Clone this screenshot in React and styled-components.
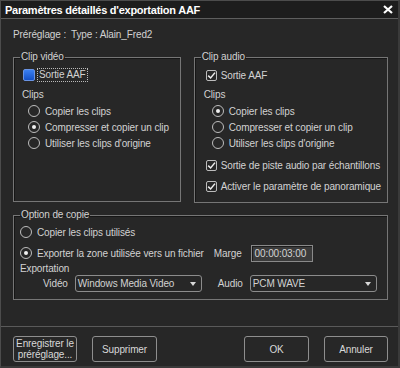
import React from 'react'
import styled, { createGlobalStyle } from 'styled-components'

const Global = createGlobalStyle`
  html, body { margin: 0; padding: 0; background: #272727; }
  body { font-family: "Liberation Sans", Arial, sans-serif; }
  * { box-sizing: border-box; }
`

const Window = styled.div`
  width: 400px;
  height: 368px;
  display: flex;
  flex-direction: column;
  background: #272727;
  border: 1px solid #4c4c4c;
  border-right: 2px solid #3a3a3a;
  border-bottom: 2px solid #3a3a3a;
  color: #d2d2d2;
  font-size: 10px;
  letter-spacing: -0.12px;
`

const TitleBar = styled.div`
  height: 18px;
  flex: none;
  display: flex;
  align-items: center;
  justify-content: space-between;
  padding: 0 5px 0 4px;
  background: #1d1d1d;
  border-bottom: 1px solid #5e5e5e;
  color: #fff;
  font-weight: bold;
  font-size: 11px;
  letter-spacing: -0.25px;
`

const Body = styled.div`
  flex: 1;
  display: flex;
  flex-direction: column;
  padding: 0 10px 0 12px;
`

const Preset = styled.div`
  height: 14px;
  margin-top: 9px;
  line-height: 14px;
  display: flex;
  gap: 5px;
`

const Columns = styled.div`
  display: flex;
  gap: 13px;
  margin-top: ${p => p.$mt}px;
`

const Group = styled.fieldset`
  margin: 0;
  padding: 0 6px;
  width: ${p => p.$w}px;
  height: ${p => p.$h}px;
  border: 1px solid #767676;
  box-shadow: inset 1px 1px 0 #161616;
  display: flex;
  flex-direction: column;
`

const Legend = styled.legend`
  padding: 0 1px;
  line-height: 12px;
  font-size: 10px;
  color: #d2d2d2;
`

const Row = styled.div`
  display: flex;
  align-items: center;
  height: ${p => p.$h || 16}px;
  margin-top: ${p => p.$mt || 0}px;
  margin-left: ${p => p.$ml || 0}px;
  gap: ${p => p.$gap || 5}px;
  white-space: nowrap;
`

const Label = styled.span`
  padding: 0 1px;
  outline: ${p => (p.$focus ? '1px dotted #bbb' : 'none')};
  outline-offset: 0;
  line-height: 12px;
`

const Box = styled.span`
  width: ${p => (p.$blue ? 12 : 11)}px;
  height: ${p => (p.$blue ? 12 : 11)}px;
  flex: none;
  border-radius: 2px;
  border: 1px solid ${p => (p.$blue ? '#6a94e4' : '#bcbcbc')};
  background: ${p => (p.$blue ? 'linear-gradient(#3b80f2, #1450c6)' : 'transparent')};
  display: flex;
  align-items: center;
  justify-content: center;
`

const Radio = styled.span`
  width: 12px;
  height: 12px;
  flex: none;
  border-radius: 50%;
  border: 1px solid #bdbdbd;
  display: flex;
  align-items: center;
  justify-content: center;
  &::after {
    content: '';
    width: 4px;
    height: 4px;
    border-radius: 50%;
    background: ${p => (p.$on ? '#f0f0f0' : 'transparent')};
  }
`

const TimeField = styled.div`
  width: 62px;
  height: 17px;
  margin-left: 4px;
  background: #3b3b3b;
  border: 1px solid #8a8a8a;
  box-shadow: inset 1px 1px 0 #1c1c1c;
  display: flex;
  align-items: center;
  padding-left: 3px;
`

const Select = styled.div`
  width: 127px;
  height: 17px;
  border: 1px solid #8c8c8c;
  border-radius: 3px;
  display: flex;
  align-items: center;
  justify-content: space-between;
  padding: 0 5px 0 2px;
  &::after {
    content: '';
    border-left: 3px solid transparent;
    border-right: 3px solid transparent;
    border-top: 4px solid #d8d8d8;
  }
`

const Footer = styled.div`
  margin-top: auto;
  border-top: 1px solid #5a5a5a;
  height: 40px;
  display: flex;
  align-items: flex-start;
  padding: 9px 10px 0 12px;
  margin-left: -12px;
  margin-right: -10px;
`

const Button = styled.div`
  width: ${p => p.$w || 65}px;
  height: 26px;
  margin-left: ${p => p.$ml || 0}px;
  border: 1px solid #8e8e8e;
  border-radius: 3px;
  display: flex;
  align-items: center;
  justify-content: center;
  text-align: center;
  line-height: 11px;
  color: #d8d8d8;
`

const Check = () => (
  <Box>
    <svg width="9" height="9" viewBox="0 0 9 9">
      <path d="M1.2 4.6 L3.6 7 L8 1.6" fill="none" stroke="#eee" strokeWidth="1.5" />
    </svg>
  </Box>
)

const RadioRow = ({ on, children, ml, mt }) => (
  <Row $ml={ml} $mt={mt}>
    <Radio $on={on} />
    <span>{children}</span>
  </Row>
)

const CheckRow = ({ children, ml, mt }) => (
  <Row $h={14} $ml={ml} $mt={mt} $gap={4}>
    <Check />
    <span>{children}</span>
  </Row>
)

export default function App() {
  return (
    <>
      <Global />
      <Window>
        <TitleBar>
          <span>Paramètres détaillés d'exportation AAF</span>
          <svg width="10" height="9" viewBox="0 0 10 9">
            <path d="M1 1 L9 8 M9 1 L1 8" stroke="#fff" strokeWidth="2.2" />
          </svg>
        </TitleBar>
        <Body>
          <Preset>
            <span>Préréglage :</span>
            <span>Type : Alain_Fred2</span>
          </Preset>
          <Columns $mt={9}>
            <Group $w={172} $h={151}>
              <Legend>Clip vidéo</Legend>
              <Row $h={14} $mt={5} $ml={3} $gap={3}>
                <Box $blue />
                <Label $focus>Sortie AAF</Label>
              </Row>
              <Row $h={14} $mt={5} $ml={2}>Clips</Row>
              <RadioRow ml={8} mt={2}>Copier les clips</RadioRow>
              <RadioRow ml={8} on>Compresser et copier un clip</RadioRow>
              <RadioRow ml={8}>Utiliser les clips d'origine</RadioRow>
            </Group>
            <Group $w={190} $h={152}>
              <Legend>Clip audio</Legend>
              <CheckRow ml={5} mt={5}>Sortie AAF</CheckRow>
              <Row $h={14} $mt={5} $ml={3}>Clips</Row>
              <RadioRow ml={11} mt={2} on>Copier les clips</RadioRow>
              <RadioRow ml={11}>Compresser et copier un clip</RadioRow>
              <RadioRow ml={11}>Utiliser les clips d'origine</RadioRow>
              <CheckRow ml={5} mt={7}>Sortie de piste audio par échantillons</CheckRow>
              <CheckRow ml={5} mt={7}>Activer le paramètre de panoramique</CheckRow>
            </Group>
          </Columns>
          <Columns $mt={6}>
            <Group $w={375} $h={91}>
              <Legend>Option de copie</Legend>
              <RadioRow mt={3}>Copier les clips utilisés</RadioRow>
              <Row $h={18} $mt={4}>
                <Radio $on />
                <span>Exporter la zone utilisée vers un fichier</span>
                <span style={{ marginLeft: 5 }}>Marge</span>
                <TimeField>00:00:03:00</TimeField>
              </Row>
              <Row $h={12}>Exportation</Row>
              <Row $h={17} $mt={1} $ml={23} $gap={7}>
                <span>Vidéo</span>
                <Select>Windows Media Video</Select>
                <span style={{ marginLeft: 9 }}>Audio</span>
                <Select>PCM WAVE</Select>
              </Row>
            </Group>
          </Columns>
          <Footer>
            <Button $w={64}>Enregistrer le<br />préréglage...</Button>
            <Button $ml={15}>Supprimer</Button>
            <Button $ml={87}>OK</Button>
            <Button $w={64} $ml={15}>Annuler</Button>
          </Footer>
        </Body>
      </Window>
    </>
  )
}
